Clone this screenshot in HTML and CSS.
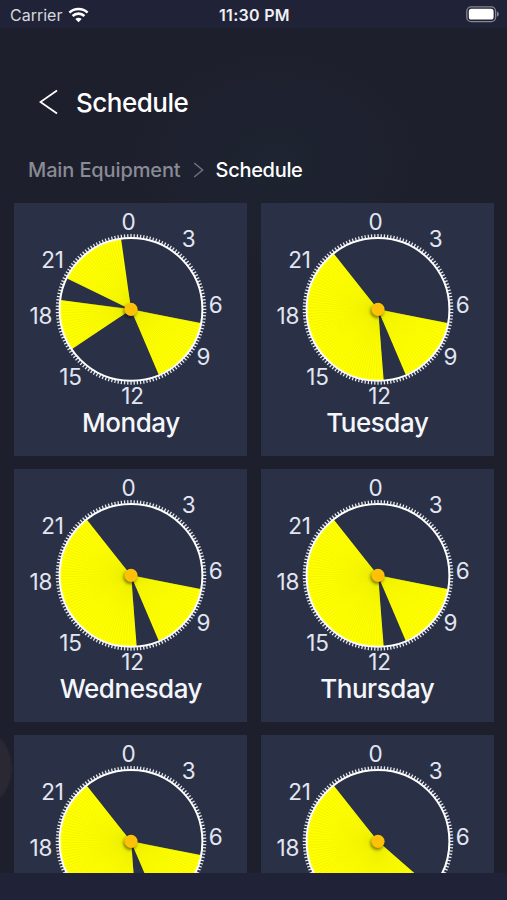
FILE: index.html
```html
<!DOCTYPE html>
<html lang="en">
<head>
  <meta charset="UTF-8" />
  <meta name="viewport" content="width=device-width, initial-scale=1" />
  <title>Schedule</title>
  <link rel="stylesheet" href="styles.css">
</head>
<body>
  <div class="status-bar">
    <div class="carrier">
      <span>Carrier</span>
      <svg class="wifi" width="21" height="16" viewBox="0 0 21 16">
        <path d="M1.4 5.6a13.2 13.2 0 0 1 18.2 0" />
        <path d="M4.6 9a8.6 8.6 0 0 1 11.8 0" />
        <path class="dot" d="M10.5 15.2l-3.2-3.1a4.8 4.8 0 0 1 6.4 0z" />
      </svg>
    </div>
    <div class="time">11:30 PM</div>
    <div class="battery">
      <svg width="33" height="17" viewBox="0 0 33 17">
        <rect class="shell" x="0.8" y="0.8" width="28.8" height="14.8" rx="4.4" />
        <rect class="level" x="2.8" y="2.8" width="24.8" height="10.8" rx="2.6" />
        <path class="cap" d="M31 5.6q1.8 .8 1.8 2.6t-1.8 2.6z" />
      </svg>
    </div>
  </div>

  <main>
    <header>
      <svg class="back" width="20" height="26" viewBox="0 0 20 26">
        <path d="M18 1.4L1.4 13L18 24.6" />
      </svg>
      <h1>Schedule</h1>
    </header>

    <nav class="breadcrumb">
      <a>Main Equipment</a>
      <svg width="11" height="16" viewBox="0 0 11 16">
        <path d="M1.2 1L9.6 8L1.2 15" />
      </svg>
      <span>Schedule</span>
    </nav>

    <div class="days" id="days"></div>
  </main>

  <div class="bottom-bar"></div>

  <script>
    // ranges are [start, end] in degrees, clockwise from midnight
    const days = [
      { name: 'Monday', ranges: [[101, 157], [236, 277.6], [295.7, 352]] },
      { name: 'Tuesday', ranges: [[101, 157], [175.4, 321.6]] },
      { name: 'Wednesday', ranges: [[101, 157], [175.4, 321.6]] },
      { name: 'Thursday', ranges: [[101, 157], [175.4, 321.6]] },
      { name: 'Friday', ranges: [[101, 157], [175.4, 321.6]] },
      { name: 'Saturday', ranges: [[131, 321.6]] }
    ];

    const hours = [
      [0, 114.5, 27], [3, 174.6, 44.4], [6, 201.6, 110.4], [9, 189.5, 162],
      [12, 118.6, 201], [15, 56.5, 182.4], [18, 26.8, 120.6], [21, 38.5, 65]
    ];

    const cx = 117, cy = 106.4, r = 71;

    function point(deg, radius) {
      const a = (deg - 90) * Math.PI / 180;
      return (cx + radius * Math.cos(a)).toFixed(2) + ' ' + (cy + radius * Math.sin(a)).toFixed(2);
    }

    function ticks() {
      let d = '';
      for (let i = 0; i < 144; i++) {
        d += 'M' + point(i * 2.5, 72) + 'L' + point(i * 2.5, 75.3);
      }
      return '<path class="ticks" d="' + d + '" />';
    }

    function wedge(start, end) {
      const large = end - start > 180 ? 1 : 0;
      let rays = '';
      for (let a = start + 1; a < end - 0.5; a += 2.5) {
        rays += 'M' + point(a, 5) + 'L' + point(a, r - 2);
      }
      return '<path class="wedge" d="M' + cx + ' ' + cy + 'L' + point(start, r) +
        'A' + r + ' ' + r + ' 0 ' + large + ' 1 ' + point(end, r) + 'z" />' +
        '<path class="rays" d="' + rays + '" />';
    }

    function dial(day) {
      return '<svg class="dial" width="233" height="206" viewBox="0 0 233 206">' +
        ticks() +
        day.ranges.map(([start, end]) => wedge(start, end)).join('') +
        '<circle class="ring" cx="' + cx + '" cy="' + cy + '" r="71.4" />' +
        '<circle class="hub" cx="' + cx + '" cy="' + cy + '" r="6.6" />' +
        hours.map(([h, x, y]) => '<text x="' + x + '" y="' + y + '">' + h + '</text>').join('') +
        '</svg>';
    }

    document.getElementById('days').innerHTML = days.map(day =>
      '<div class="card">' + dial(day) + '<div class="day-name">' + day.name + '</div></div>'
    ).join('');
  </script>
</body>
</html>
```
FILE: styles.css
```css
* {
  box-sizing: border-box;
}
body {
  margin: 0;
  height: 100vh;
  display: flex;
  flex-direction: column;
  overflow: hidden;
  background: #1e1f2d;
  color: #fff;
  font-family: Inter, 'Liberation Sans', sans-serif;
}
.status-bar {
  flex: none;
  height: 28px;
  padding: 1px 8px 0 10px;
  display: grid;
  grid-template-columns: 1fr auto 1fr;
  align-items: center;
  background: #202337;
  font-size: 16px;
}
.carrier {
  display: flex;
  align-items: center;
  gap: 6px;
  color: #d6d7dd;
}
.wifi path {
  fill: none;
  stroke: #fff;
  stroke-width: 2.6;
}
.wifi .dot {
  fill: #fff;
  stroke: none;
}
.time {
  font-weight: 600;
  letter-spacing: 0.3px;
  color: #f0f0f4;
}
.battery {
  display: flex;
  justify-content: flex-end;
}
.shell {
  fill: none;
  stroke: #85868f;
  stroke-width: 1.3;
}
.level {
  fill: #fff;
}
.cap {
  fill: #85868f;
}
main {
  flex: 1;
  min-height: 0;
  display: flex;
  flex-direction: column;
  overflow: hidden;
  background:
    radial-gradient(circle 45px at -32px 740px, #2a2833 94%, transparent),
    radial-gradient(ellipse 150px 110px at 275px 130px, #1e2431, transparent),
    #1e1f2d;
}
header {
  flex: none;
  display: flex;
  align-items: center;
  gap: 17px;
  height: 40px;
  margin: 54px 0 0 39px;
}
.back path {
  fill: none;
  stroke: #fff;
  stroke-width: 1.8;
}
h1 {
  margin: 0;
  font-size: 26px;
  font-weight: 500;
  letter-spacing: -0.5px;
}
.breadcrumb {
  flex: none;
  display: flex;
  align-items: center;
  height: 30px;
  margin: 33px 0 0 28px;
  font-size: 20px;
  font-weight: 500;
}
.breadcrumb a {
  letter-spacing: -0.12px;
  color: #898b95;
}
.breadcrumb svg {
  margin: 0 12px;
}
.breadcrumb path {
  fill: none;
  stroke: #70727e;
  stroke-width: 1.5;
}
.breadcrumb span {
  letter-spacing: -0.3px;
}
.days {
  display: grid;
  grid-template-columns: 233px 233px;
  grid-auto-rows: 252.6px;
  gap: 13.4px;
  padding: 18.3px 14.4px 0;
}
.card {
  background: #2a3146;
  text-align: center;
}
.dial {
  display: block;
}
.ticks {
  stroke: #e6e8ef;
  stroke-width: 1.3;
}
.ring {
  fill: none;
  stroke: #fff;
  stroke-width: 2;
}
.wedge {
  fill: #ffff00;
}
.rays {
  stroke: #e6e800;
  stroke-width: 0.45;
}
.hub {
  fill: #ffc107;
  filter: drop-shadow(-1px 2px 1.5px rgba(0, 0, 0, 0.45));
}
.dial text {
  fill: #e3e6f2;
  font-size: 22.5px;
  letter-spacing: -0.2px;
  text-anchor: middle;
}
.day-name {
  margin-top: -2px;
  line-height: 32px;
  font-size: 26px;
  font-weight: 500;
  letter-spacing: -0.45px;
  color: #f5f6fb;
}
.bottom-bar {
  flex: none;
  height: 27px;
  background: #202337;
}
```
